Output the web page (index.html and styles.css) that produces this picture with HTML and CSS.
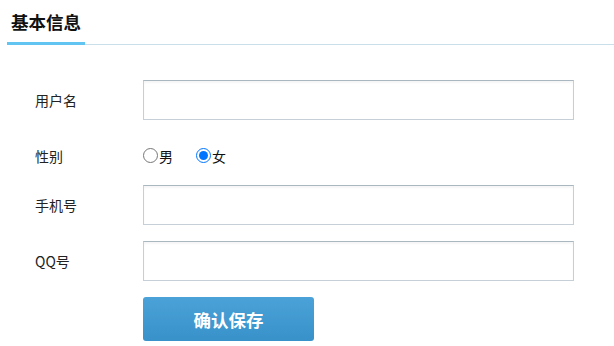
FILE: index.html
```html
<!DOCTYPE html>
<html lang="zh-CN">
<head>
<meta charset="utf-8">
<title>基本信息</title>
<link rel="stylesheet" href="styles.css">
</head>
<body>
<div class="tabs">
  <span class="tab active">基本信息</span>
</div>
<form class="form">
  <div class="row">
    <span class="label">用户名</span>
    <input class="field" type="text">
  </div>
  <div class="row radio-row">
    <span class="label">性别</span>
    <label class="opt"><input type="radio" name="sex">男</label>
    <label class="opt"><input type="radio" name="sex" checked>女</label>
  </div>
  <div class="row">
    <span class="label">手机号</span>
    <input class="field" type="text">
  </div>
  <div class="row">
    <span class="label">QQ号</span>
    <input class="field" type="text">
  </div>
  <div class="row">
    <span class="label"></span>
    <button class="btn" type="button">确认保存</button>
  </div>
</form>
</body>
</html>
```

FILE: styles.css
```css
html, body {
  margin: 0;
  padding: 0;
  background: #ffffff;
}

body {
  font-family: "Noto Sans CJK SC", "Noto Sans", sans-serif;
  color: #222222;
  font-size: 14px;
}

.tabs {
  margin-left: 7px;
  height: 44px;
  border-bottom: 1px solid #c9dfe9;
  display: flex;
  align-items: flex-start;
}

.tab {
  padding: 2px 4px 0;
  line-height: 40px;
  font-size: 17.5px;
  font-weight: bold;
  color: #111111;
  border-bottom: 3px solid #62c4f0;
  margin-bottom: -1px;
}

.form {
  margin: 35px 0 0 35px;
  display: flex;
  flex-direction: column;
  gap: 16px;
}

.row {
  display: flex;
  align-items: center;
}

.label {
  width: 108px;
  flex: none;
  font-size: 14px;
  color: #222222;
}

.field {
  width: 431px;
  height: 40px;
  box-sizing: border-box;
  margin: 0;
  border: 1px solid #c6cfd7;
  border-top-color: #a9b7c1;
  background: #ffffff;
  box-shadow: inset 0 2px 2px rgba(0, 0, 0, 0.04);
  font: inherit;
  padding: 0 8px;
}

.radio-row {
  height: 33px;
  box-sizing: border-box;
  padding-top: 6px;
}

.opt {
  display: flex;
  align-items: center;
  margin-right: 23px;
  font-size: 14px;
  color: #111111;
}

.opt input {
  margin: 0 1px 0 0;
  width: 15px;
  height: 15px;
}

.btn {
  width: 171px;
  height: 44px;
  border: none;
  border-radius: 3px;
  background: linear-gradient(#4aa2d8, #3891c9);
  color: #ffffff;
  font-family: inherit;
  font-size: 17.5px;
  font-weight: bold;
  cursor: pointer;
}
```
